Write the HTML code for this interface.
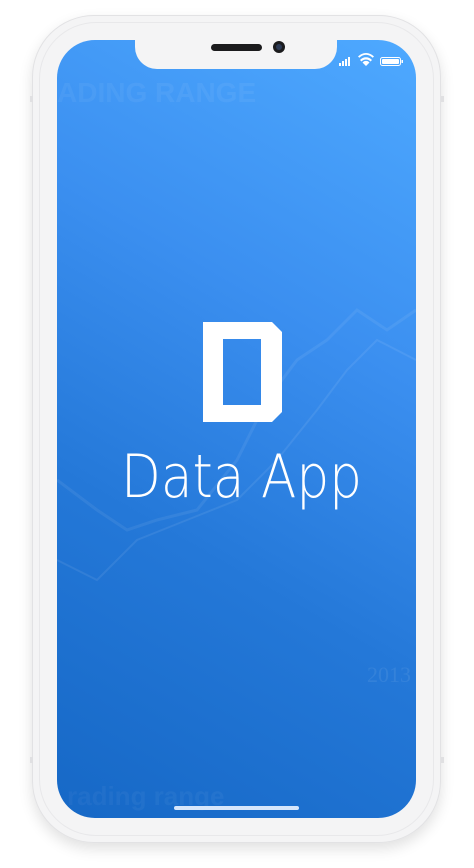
<!DOCTYPE html>
<html><head><meta charset="utf-8"><style>
html,body{margin:0;padding:0;background:#fff;width:474px;height:868px;overflow:hidden}
.phone{position:absolute;left:32px;top:15px;width:409px;height:828px;border-radius:62px;background:#f4f4f5;box-shadow:0 6px 14px rgba(0,0,0,0.12),inset 0 0 0 1px #e2e2e4}
.inner{position:absolute;left:40px;top:23px;width:393px;height:812px;border-radius:56px;box-shadow:0 0 0 1px #e8e8ea}
.screen{position:absolute;left:57px;top:40px;width:359px;height:778px;border-radius:38px;overflow:hidden;background:linear-gradient(210deg,#4ea9ff 0%,#3b8ff0 35%,#2478d8 65%,#1668c6 100%)}
.notch{position:absolute;left:135px;top:38px;width:202px;height:31px;background:#f4f4f5;border-radius:0 0 22px 22px}
.spk{position:absolute;left:211px;top:44px;width:51px;height:7px;border-radius:4px;background:#1b1b1d}
.cam{position:absolute;left:273px;top:41px;width:12px;height:12px;border-radius:50%;background:#1b1b1d}
.cam:after{content:"";position:absolute;left:3px;top:3px;width:6px;height:6px;border-radius:50%;background:#2c3a55}
.btn{position:absolute;background:#e0e0e2}
.home{position:absolute;left:174px;top:806px;width:125px;height:4px;border-radius:2px;background:#d6e6fb}
</style></head><body>
<div class="phone"></div>
<div class="inner"></div>
<div class="btn" style="left:30px;top:96px;width:3px;height:6px"></div>
<div class="btn" style="left:441px;top:96px;width:3px;height:6px"></div>
<div class="btn" style="left:30px;top:757px;width:3px;height:6px"></div>
<div class="btn" style="left:441px;top:757px;width:3px;height:6px"></div>
<div class="screen">
<svg width="359" height="778" style="position:absolute;left:0;top:0">
<text x="0" y="62" font-family="Liberation Sans" font-weight="bold" font-size="28" fill="#ffffff" opacity="0.05">ADING RANGE</text>
<polyline points="0,440 40,470 70,490 100,480 140,470 180,420 210,360 240,320 270,300 300,270 330,290 359,270" fill="none" stroke="#fff" stroke-opacity="0.07" stroke-width="3"/>
<polyline points="0,520 40,540 80,500 130,480 180,460 220,420 260,370 290,330 320,300 359,320" fill="none" stroke="#fff" stroke-opacity="0.08" stroke-width="2"/>
<text x="310" y="642" font-family="Liberation Serif" font-size="22" fill="#fff" opacity="0.07">2013</text>
<text x="10" y="765" font-family="Liberation Sans" font-weight="bold" font-size="26" fill="#fff" opacity="0.04">rading range</text>
</svg>
</div>
<div class="notch"></div>
<div class="spk"></div>
<div class="cam"></div>
<svg width="474" height="868" style="position:absolute;left:0;top:0">
<g fill="#fff">
<rect x="339" y="63" width="2" height="3"/><rect x="342" y="61" width="2" height="5"/><rect x="345" y="59" width="2" height="7"/><rect x="348" y="57" width="2" height="9"/>
<path d="M360 60 a8 8 0 0 1 12 0 l-1.5 1.5 a6 6 0 0 0 -9 0z M362.5 62.5 a4.5 4.5 0 0 1 7 0 l-3.5 3.5z"/>
<path d="M358 56.5 a11 11 0 0 1 16 0 l-1.3 1.3 a9 9 0 0 0 -13.4 0z"/>
<rect x="380.5" y="57.5" width="20" height="8" rx="2" fill="none" stroke="#fff" stroke-width="1"/>
<rect x="382" y="59" width="17" height="5" rx="1"/>
<rect x="401.5" y="60" width="1.5" height="3"/>
<path d="M203 322 H272 L282 332 V412 L272 422 H203 Z M223 339 V405 H261 V339 Z" fill-rule="evenodd"/>
<text x="121" y="497" font-family="DejaVu Sans, Liberation Sans, sans-serif" font-weight="200" font-size="60" textLength="241" lengthAdjust="spacingAndGlyphs">Data App</text>
</g>
</svg>
<div class="home"></div>
</body></html>
